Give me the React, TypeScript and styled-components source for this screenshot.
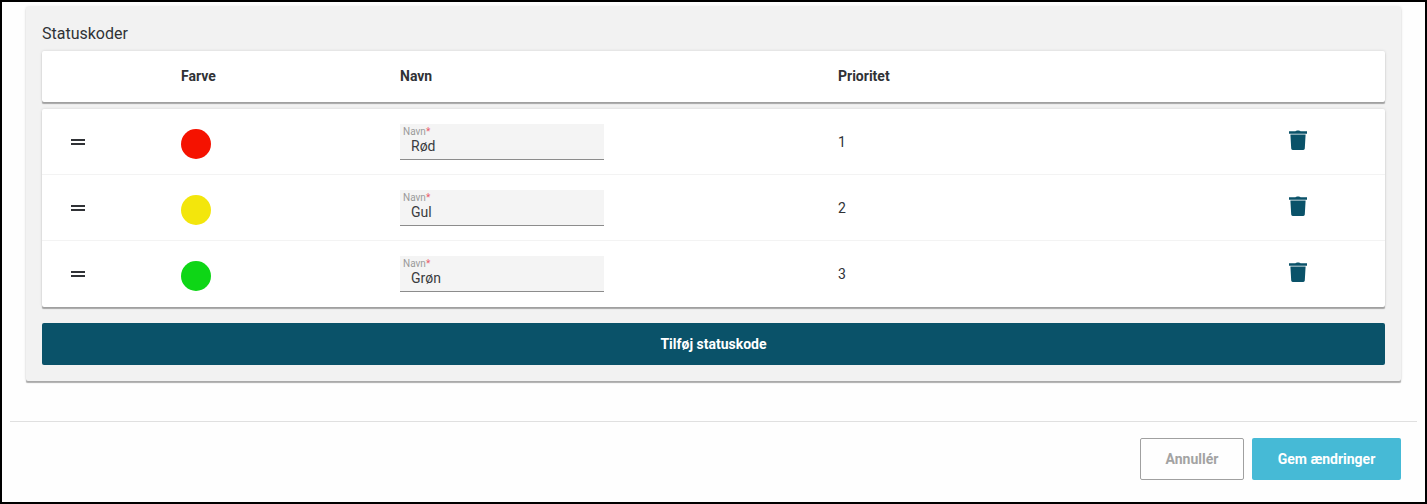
import * as React from 'react';
import styled, { createGlobalStyle } from 'styled-components';

const Global = createGlobalStyle`
    html, body {
        margin: 0;
        padding: 0;
        background: #fff;
    }
    * {
        box-sizing: border-box;
    }
`;

const Frame = styled.div`
    width: 1427px;
    height: 504px;
    border: 2px solid #000;
    background: #fefefe;
    font-family: Roboto, "Liberation Sans", sans-serif;
    color: #303236;
    overflow: hidden;
    padding-top: 5px;
`;
const Panel = styled.section`
    margin: 0 24px;
    height: 374px;
    padding: 17px 16px 0;
    background: #f2f2f2;
    border-radius: 2px;
    box-shadow: 0 2px 1px -0.5px rgba(0, 0, 0, 0.3), 0 0 3px rgba(0, 0, 0, 0.14);
`;
const Title = styled.h2`
    margin: 0;
    height: 27px;
    font-size: 16px;
    line-height: 20px;
    font-weight: 400;
`;
const Card = styled.div`
    background: #fff;
    border-radius: 2px;
    box-shadow: 0 2px 1px -0.5px rgba(0, 0, 0, 0.3), 0 0 3px rgba(0, 0, 0, 0.14);
`;
const Row = styled.div<{ $head?: boolean }>`
    display: grid;
    grid-template-columns: 139px 219px 438px 451px 1fr;
    align-items: center;
    height: ${props => props.$head ? 51 : 66}px;
    padding-bottom: ${props => props.$head ? 2 : 0}px;
    font-size: 14px;
    font-weight: ${props => props.$head ? 700 : 400};
    border-bottom: ${props => props.$head ? 'none' : '1px solid #f3f3f3'};
    &:last-child {
        border-bottom-color: transparent;
    }
`;
const Rows = styled(Card)`
    margin-top: 7px;
    height: 198px;
`;
const Handle = styled.div`
    width: 14px;
    height: 6px;
    margin-left: 29px;
    border-top: 2px solid #303236;
    border-bottom: 2px solid #303236;
`;
const Dot = styled.div<{ $color: string }>`
    width: 30px;
    height: 30px;
    border-radius: 50%;
    background: ${props => props.$color};
    margin-top: 4px;
`;
const Field = styled.div`
    width: 204px;
    height: 36px;
    margin-top: 1px;
    padding: 3px 3px 0;
    background: #f4f4f4;
    border-bottom: 1px solid #8c8c8c;
`;
const FieldLabel = styled.div`
    font-size: 10px;
    line-height: 10px;
    color: #9a9a9a;
    span {
        color: #e8606a;
    }
`;
const FieldValue = styled.div`
    font-size: 14px;
    line-height: 18px;
    padding-left: 8px;
    color: #3a3c40;
`;
const Trash = styled.svg`
    display: block;
    width: 18px;
    height: 20px;
    margin-top: -3px;
`;
const AddButton = styled.button`
    display: block;
    width: 100%;
    height: 42px;
    margin-top: 16px;
    border: 0;
    border-radius: 2px;
    background: #0a5269;
    color: #fff;
    font: 700 14px Roboto, "Liberation Sans", sans-serif;
`;
const Footer = styled.footer`
    display: flex;
    justify-content: flex-end;
    gap: 8px;
    margin: 40px 8px 0;
    padding: 16px 16px 0;
    border-top: 1px solid #e0e0e0;
`;
const FooterButton = styled.button<{ $primary?: boolean }>`
    width: ${props => props.$primary ? 149 : 104}px;
    height: 42px;
    border: ${props => props.$primary ? '0' : '1px solid #a0a0a0'};
    border-radius: 2px;
    background: ${props => props.$primary ? '#46bad6' : 'transparent'};
    color: ${props => props.$primary ? '#fff' : '#a3a3a3'};
    font: 700 14px Roboto, "Liberation Sans", sans-serif;
`;

const codes = [
    { name: 'Rød', color: '#f51200', priority: 1 },
    { name: 'Gul', color: '#f3e60c', priority: 2 },
    { name: 'Grøn', color: '#0ed616', priority: 3 },
];

const TrashIcon = () => (
    <Trash viewBox="0 0 18 20">
        <path
            fill="#0a5269"
            d="M6.4 1.3 C7 .1 11 .1 11.6 1.3 L18 1.3 L18 3.7 L0 3.7 L0 1.3 Z M1.4 4.6 L16.6 4.6 L15.8 18.6 Q15.7 20 14.3 20 L3.7 20 Q2.3 20 2.2 18.6 Z"
        />
    </Trash>
);

export default function App() {
    return (
        <Frame>
            <Global />
            <Panel>
                <Title>Statuskoder</Title>
                <Card>
                    <Row $head>
                        <span />
                        <span>Farve</span>
                        <span>Navn</span>
                        <span>Prioritet</span>
                    </Row>
                </Card>
                <Rows>
                    {codes.map(x => (
                        <Row key={x.name}>
                            <Handle />
                            <Dot $color={x.color} />
                            <Field>
                                <FieldLabel>Navn<span>*</span></FieldLabel>
                                <FieldValue>{x.name}</FieldValue>
                            </Field>
                            <span>{x.priority}</span>
                            <TrashIcon />
                        </Row>
                    ))}
                </Rows>
                <AddButton>Tilføj statuskode</AddButton>
            </Panel>
            <Footer>
                <FooterButton>Annullér</FooterButton>
                <FooterButton $primary>Gem ændringer</FooterButton>
            </Footer>
        </Frame>
    );
}
